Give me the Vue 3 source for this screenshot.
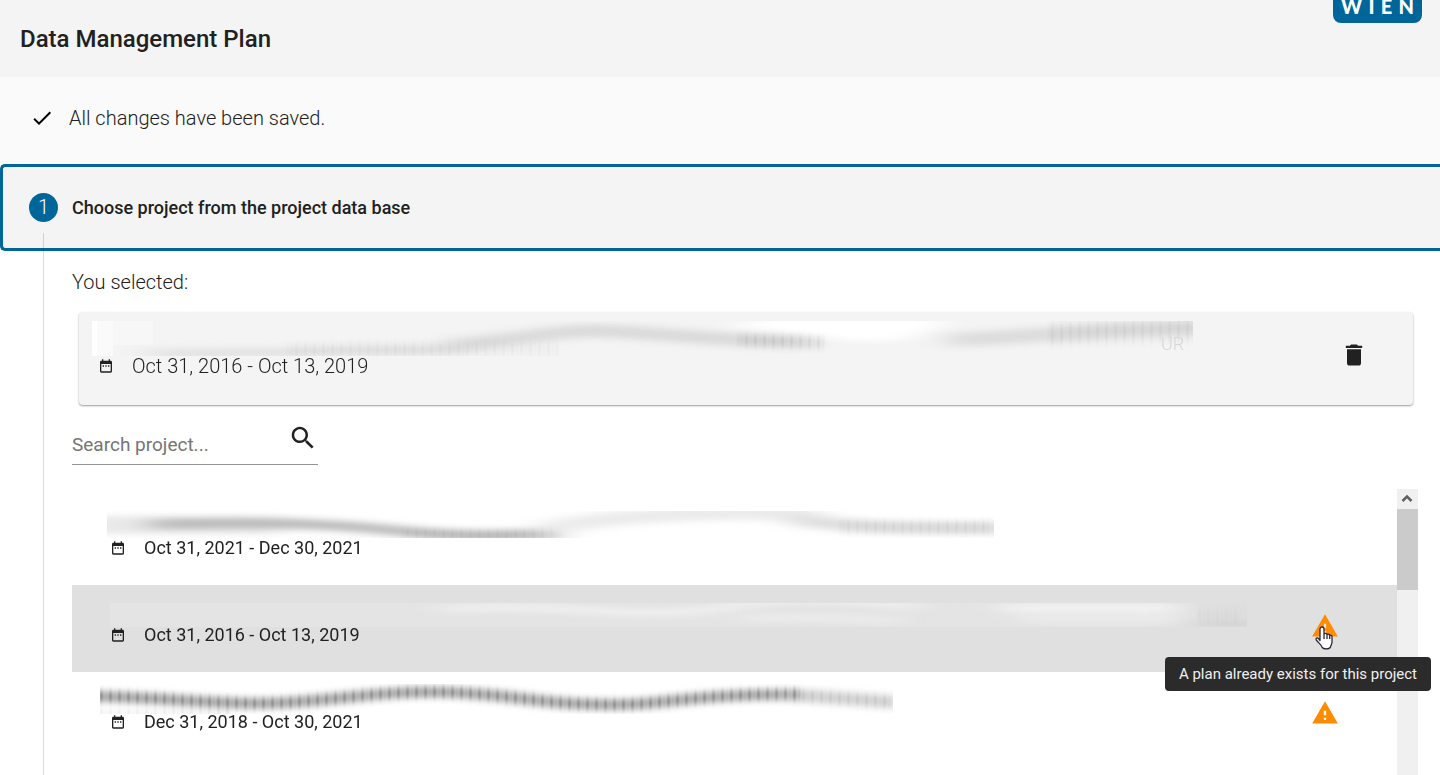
<template>
  <div class="page">
    <header class="header">
      <h1 class="header__title">Data Management Plan</h1>
      <div class="logo" aria-label="Wien">
        <span v-for="letter in 'WIEN'" :key="letter">{{ letter }}</span>
      </div>
    </header>

    <div class="status">
      <svg class="status__icon" viewBox="0 0 24 24" aria-hidden="true">
        <path d="M9 16.17 4.83 12l-1.42 1.41L9 19 21 7l-1.41-1.41z"/>
      </svg>
      <span>All changes have been saved.</span>
    </div>

    <button class="step" type="button">
      <span class="step__number">1</span>
      <span class="step__label">Choose project from the project data base</span>
    </button>

    <main class="content">
      <p class="content__caption">You selected:</p>

      <section class="card">
        <div class="entry">
          <svg class="smear" width="1160" height="36" aria-hidden="true">
            <defs>
              <clipPath id="clip-card"><rect x="4" y="1" width="1101" height="35"/></clipPath>
            </defs>
            <g clip-path="url(#clip-card)">
              <rect x="4" y="1" width="5" height="35" fill="#fff"/>
              <rect x="9" y="1" width="16" height="35" fill="#fafafa"/>
              <rect x="25" y="1" width="40" height="24" fill="#f7f7f7"/>
              <g filter="url(#smear)">
                <path d="M640 6Q740 -16 860 0Q820 30 740 18Z" fill="#fff"/>
                <path d="M60 33C160 35 280 28 370 30" stroke="#e2e2e2" stroke-width="9"/>
                <path d="M360 26C430 20 480 8 520 11C600 16 640 21 720 22" stroke="#dadada" stroke-width="13"/>
                <path d="M860 20C930 18 990 9 1140 7" stroke="#dcdcdc" stroke-width="14"/>
              </g>
              <g filter="url(#soft)">
                <path d="M200 30H470" stroke="url(#stripes)" stroke-width="14" opacity=".05"/>
                <path d="M650 20L738 23" stroke="url(#stripes)" stroke-width="10" opacity=".14"/>
                <path d="M960 14L1105 11" stroke="url(#stripes)" stroke-width="22" opacity=".07"/>
              </g>
              <text x="1073" y="30" class="smear__text">UR</text>
            </g>
          </svg>
          <div class="entry__date">
            <svg class="entry__calendar" viewBox="0 0 24 24" aria-hidden="true"><path :d="icons.calendar"/></svg>
            <span class="light">Oct 31, 2016 - Oct 13, 2019</span>
          </div>
        </div>
        <button class="card__delete" type="button" aria-label="Remove project">
          <svg class="icon" viewBox="0 0 24 24"><path d="M6 19c0 1.100.9 2 2 2h8c1.100 0 2-.9 2-2V7H6v12zM19 4h-3.500l-1-1h-5l-1 1H5v2h14V4z"/></svg>
        </button>
      </section>

      <form class="search" @submit.prevent>
        <input v-model="query" class="search__input" type="text" placeholder="Search project..." aria-label="Search project">
        <button class="search__button" type="submit" aria-label="Search">
          <svg viewBox="0 0 24 24"><path d="M15.500 14h-.79l-.28-.27C15.410 12.590 16 11.110 16 9.500 16 5.910 13.090 3 9.500 3S3 5.910 3 9.500 5.910 16 9.500 16c1.610 0 3.090-.59 4.230-1.570l.27.28v.79l5 4.990L20.490 19l-4.990-5zm-6 0C7.010 14 5 11.990 5 9.500S7.010 5 9.500 5 14 7.010 14 9.500 11.990 14 9.500 14z"/></svg>
        </button>
      </form>

      <div class="results">
        <ul class="list">
          <li v-for="project in projects"
              :key="project.id"
              class="row"
              :class="{'row--active': project.active}">
            <div class="entry">
              <svg class="smear" width="1160" height="28" aria-hidden="true">
                <defs>
                  <clipPath :id="'clip-' + project.id">
                    <rect :x="project.box.x" :y="project.box.y" :width="project.box.w" :height="project.box.h"/>
                  </clipPath>
                </defs>
                <g :clip-path="`url(#clip-${project.id})`">
                  <rect v-if="project.active" width="1160" height="30" fill="#e4e4e4"/>
                  <g filter="url(#smear)">
                    <path v-for="(stroke, i) in project.strokes"
                          :key="i"
                          :d="stroke.d"
                          :stroke="stroke.color"
                          :stroke-width="stroke.width"/>
                  </g>
                  <g filter="url(#soft)">
                    <path v-for="(stripe, i) in project.stripes"
                          :key="i"
                          :d="stripe.d"
                          stroke="url(#stripes)"
                          :stroke-width="stripe.width"
                          :opacity="stripe.opacity"/>
                  </g>
                </g>
              </svg>
              <div class="entry__date">
                <svg class="entry__calendar" viewBox="0 0 24 24" aria-hidden="true"><path :d="icons.calendar"/></svg>
                <span>{{ project.date }}</span>
              </div>
            </div>
            <div v-if="project.warning" class="row__warning">
              <svg class="icon icon--warning" viewBox="0 0 24 24"><path :d="icons.warning"/></svg>
              <svg v-if="project.active" class="pointer" viewBox="0 0 18 24" aria-hidden="true">
                <path d="M5 14.500V3a2 2 0 0 1 4 0v5a1.700 1.700 0 0 1 3 .6 1.700 1.700 0 0 1 2.700.8A1.500 1.500 0 0 1 17 10.800V16c0 2-1.200 3.200-1.500 5-1 2.500-7.500 2.500-8.500 0C6.500 19 3 16.500 1.200 13.800c-.7-1.600 1.200-2.500 2.300-1.300zM9 8v5M12 9v4M14.700 9.800V13"/>
              </svg>
            </div>
          </li>
        </ul>
        <div class="scrollbar" aria-hidden="true">
          <svg class="scrollbar__arrow" viewBox="0 0 20 20"><path d="M5.500 12 10 7.500l4.500 4.500"/></svg>
          <div class="scrollbar__thumb"></div>
        </div>
        <div class="tooltip" role="tooltip">A plan already exists for this project</div>
      </div>
    </main>

    <!-- shared by the blurred project titles -->
    <svg class="defs" width="0" height="0" aria-hidden="true">
      <defs>
        <pattern id="stripes" width="9" height="40" patternUnits="userSpaceOnUse">
          <rect width="3" height="40" fill="#222"/>
          <rect x="5" width="2" height="40" fill="#666"/>
        </pattern>
        <filter id="smear" filterUnits="userSpaceOnUse" x="-60" y="-30" width="1300" height="100" color-interpolation-filters="sRGB">
          <feGaussianBlur stdDeviation="16 3"/>
        </filter>
        <filter id="soft" filterUnits="userSpaceOnUse" x="-60" y="-30" width="1300" height="100" color-interpolation-filters="sRGB">
          <feGaussianBlur stdDeviation="1 3"/>
        </filter>
      </defs>
    </svg>
  </div>
</template>

<script setup>
import {ref} from 'vue';

const query = ref('');

const icons = {
  calendar: 'M9 11H7v2h2v-2zm4 0h-2v2h2v-2zm4 0h-2v2h2v-2zm2-7h-1V2h-2v2H8V2H6v2H5c-1.110 0-2 .9-2 2v14c0 1.100.89 2 2 2h14c1.100 0 2-.9 2-2V6c0-1.100-.9-2-2-2zm0 16H5V9h14v11z',
  warning: 'M1 21h22L12 2 1 21zm12-3h-2v-2h2v2zm0-4h-2v-4h2v4z'
};

const projects = [
  {
    id: 1,
    date: 'Oct 31, 2021 - Dec 30, 2021',
    box: {x: 7, y: 1, w: 887, h: 27},
    strokes: [
      {d: 'M-40 15H180', color: '#e9e9e9', width: 18},
      {d: 'M50 14C200 12 230 14 300 21S400 25 460 24', color: '#bababa', width: 10},
      {d: 'M440 20C520 2 660 0 720 6', color: '#ebebeb', width: 14},
      {d: 'M690 8C740 18 800 18 920 18', color: '#dedede', width: 12}
    ],
    stripes: [
      {d: 'M740 17Q800 18 890 17', width: 12, opacity: 0.08},
      {d: 'M300 23Q400 26 460 24', width: 7, opacity: 0.08}
    ]
  },
  {
    id: 2,
    date: 'Oct 31, 2016 - Oct 13, 2019',
    active: true,
    warning: true,
    box: {x: 10, y: 6, w: 1137, h: 24},
    strokes: [
      {d: 'M340 12Q420 8 500 14T640 8T820 10', color: '#f0f0f0', width: 7},
      {d: 'M640 22Q700 18 800 24', color: '#ededed', width: 6},
      {d: 'M900 11H1080', color: '#f2f2f2', width: 9},
      {d: 'M920 22H1080', color: '#ececec', width: 7},
      {d: 'M1090 14H1200', color: '#dedede', width: 26},
      {d: 'M1090 28H1200', color: '#cdcdcd', width: 4}
    ],
    stripes: [{d: 'M1096 19L1140 20', width: 12, opacity: 0.04}]
  },
  {
    id: 3,
    date: 'Dec 31, 2018 - Oct 30, 2021',
    warning: true,
    box: {x: 0, y: 0, w: 793, h: 30},
    strokes: [
      {d: 'M-40 12C60 12 120 22 180 19S280 7 340 8S430 18 480 20S540 20 570 17S640 9 720 12', color: '#bcbcbc', width: 10},
      {d: 'M690 11Q740 14 820 20', color: '#dcdcdc', width: 13}
    ],
    stripes: [
      {d: 'M-10 12C60 12 120 22 180 19S280 7 340 8S430 18 480 20S540 20 570 17S640 9 700 10', width: 10, opacity: 0.42},
      {d: 'M690 11Q740 14 790 18', width: 10, opacity: 0.15},
      {d: 'M0 29H130', width: 3, opacity: 0.25}
    ]
  }
];
</script>

<style>
body {
  margin: 0;
}
</style>

<style scoped>
.page {
  display: flex;
  flex-direction: column;
  height: 100vh;
  overflow: hidden;
  background: #fff;
  color: #212121;
  font-family: Roboto, "Liberation Sans", sans-serif;
  font-size: 20px;
  line-height: 24px;
}

button {
  padding: 0;
  border: 0;
  background: none;
  color: inherit;
  font: inherit;
  text-align: left;
  cursor: pointer;
}

svg {
  display: block;
  flex: none;
}

.header {
  position: relative;
  flex: none;
  display: flex;
  align-items: center;
  height: 77px;
  padding: 0 20px;
  background: #f4f4f4;
}

.header__title {
  margin: 0;
  font-size: 24px;
  font-weight: 500;
}

.logo {
  position: absolute;
  top: -66px;
  right: 18px;
  display: flex;
  align-items: flex-end;
  justify-content: space-between;
  box-sizing: border-box;
  width: 89px;
  height: 89px;
  padding: 0 8px 5px;
  border-radius: 8px;
  background: #006699;
  color: #fff;
  font-family: Lato, sans-serif;
  font-size: 20px;
  font-weight: 900;
}

.status {
  flex: none;
  display: flex;
  align-items: center;
  gap: 15px;
  height: 82px;
  padding: 0 30px 5px;
  background: #fafafa;
  font-weight: 300;
}

.status__icon {
  width: 24px;
  height: 24px;
}

.step {
  flex: none;
  display: flex;
  align-items: center;
  gap: 14px;
  box-sizing: border-box;
  height: 87px;
  padding: 0 26px;
  border: 3px solid #006699;
  border-right: 0;
  border-radius: 5px 0 0 5px;
  background: #f4f4f4;
}

.step__number {
  width: 29px;
  border-radius: 50%;
  background: #006699;
  color: #fff;
  font-weight: 300;
  line-height: 29px;
  text-align: center;
}

.step__label {
  font-size: 18px;
  font-weight: 500;
}

.content {
  position: relative;
  flex: 1;
  display: flex;
  flex-direction: column;
  min-height: 0;
  padding: 19px 22px 0 72px;
}

/* connector between the stepper circles */
.content::before {
  content: "";
  position: absolute;
  top: -18px;
  bottom: 0;
  left: 43px;
  width: 1px;
  background: rgba(0, 0, 0, 0.14);
}

.content__caption {
  margin: 0 0 18px;
  font-weight: 300;
}

.card {
  flex: none;
  display: flex;
  align-items: flex-start;
  justify-content: space-between;
  box-sizing: border-box;
  height: 93px;
  margin: 0 5px 0 7px;
  padding: 8px 45px 0 9px;
  border-radius: 4px;
  background: #f4f4f4;
  box-shadow: 0 1px 2px rgba(0, 0, 0, 0.4);
}

.card__delete {
  padding-top: 21px;
}

.light {
  font-weight: 300;
}

.icon {
  width: 28px;
  height: 28px;
  fill: #212121;
}

.icon--warning {
  fill: #ff8c00;
}

.entry {
  min-width: 0;
}

.entry__date {
  display: flex;
  align-items: center;
  gap: 18px;
  padding-left: 10px;
  line-height: 20px;
}

.entry__calendar {
  width: 16px;
  height: 16px;
  fill: #212121;
}

.smear {
  overflow: visible;
  fill: none;
}

.smear__text {
  fill: #d6d6d6;
  font-size: 18px;
  font-weight: 300;
}

.search {
  flex: none;
  display: flex;
  align-items: flex-start;
  justify-content: space-between;
  box-sizing: border-box;
  width: 246px;
  height: 42px;
  margin: 18px 0 24px;
  border-bottom: 1px solid #949494;
}

.search__input {
  width: 200px;
  padding: 10px 0 0;
  border: 0;
  outline: 0;
  background: none;
  color: #212121;
  font: inherit;
  font-size: 19px;
}

.search__input::placeholder {
  color: #757575;
  opacity: 1;
}

.search__button svg {
  width: 30px;
  height: 30px;
  fill: #212121;
}

.results {
  position: relative;
  flex: 1;
  display: flex;
  min-height: 0;
}

.list {
  flex: 1;
  min-width: 0;
  margin: 0;
  padding: 9px 0 0;
  list-style: none;
}

.row {
  display: flex;
  justify-content: space-between;
  box-sizing: border-box;
  height: 87px;
  padding: 12px 58px 0 28px;
  font-size: 18px;
}

.row--active {
  background: #e0e0e0;
}

.row__warning {
  position: relative;
  padding-top: 15px;
}

.pointer {
  position: absolute;
  top: 29px;
  left: 4px;
  width: 18px;
  height: 24px;
  fill: #fff;
  stroke: #26263a;
  stroke-width: 1.3;
  stroke-linejoin: round;
}

.scrollbar {
  width: 21px;
  background: #f0f0f0;
}

.scrollbar__arrow {
  width: 20px;
  height: 20px;
  fill: none;
  stroke: #606060;
  stroke-width: 2.5;
}

.scrollbar__thumb {
  height: 81px;
  background: #cbcbcb;
}

.tooltip {
  position: absolute;
  top: 168px;
  right: -13px;
  padding: 5px 14px;
  border-radius: 4px;
  background: #2b2b2b;
  color: #f0f0f0;
  font-size: 15px;
}
</style>
